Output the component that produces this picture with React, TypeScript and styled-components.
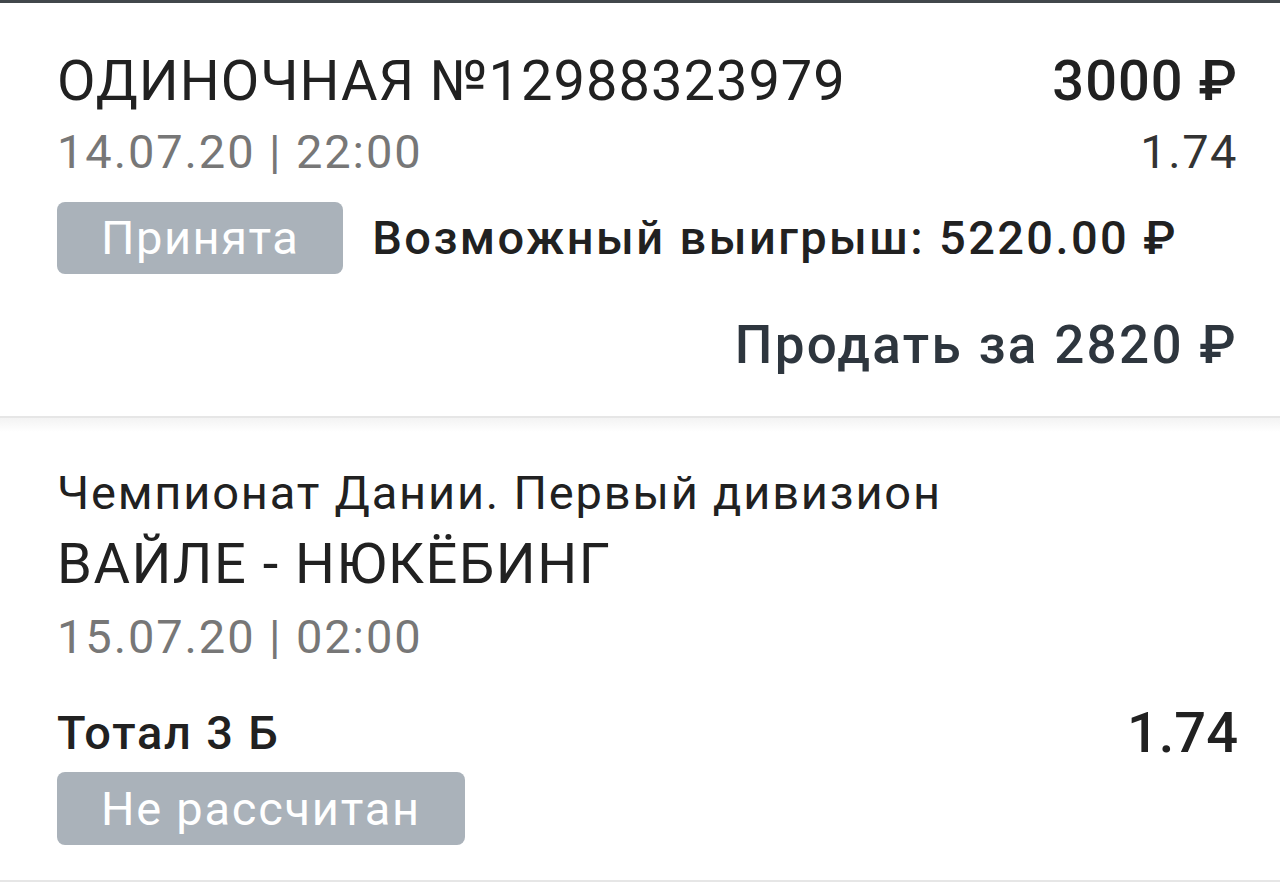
import React from 'react'
import styled, { createGlobalStyle } from 'styled-components'

const GlobalStyle = createGlobalStyle`
  html, body {
    margin: 0;
    padding: 0;
    background: #ffffff;
  }

  body {
    font-family: Roboto, "Noto Sans", "Liberation Sans", sans-serif;
    color: #212121;
    -webkit-font-smoothing: antialiased;
  }
`

interface IBetCoupon {
  number: string
  date: string
  stake: number
  coef: string
  status: string
  possibleWin: string
  sellPrice: number
}

interface IBetEvent {
  league: string
  teams: string
  date: string
  outcome: string
  coef: string
  status: string
}

const coupon: IBetCoupon = {
  number: '12988323979',
  date: '14.07.20 | 22:00',
  stake: 3000,
  coef: '1.74',
  status: 'Принята',
  possibleWin: '5220.00',
  sellPrice: 2820,
}

const event: IBetEvent = {
  league: 'Чемпионат Дании. Первый дивизион',
  teams: 'ВАЙЛЕ - НЮКЁБИНГ',
  date: '15.07.20 | 02:00',
  outcome: 'Тотал 3 Б',
  coef: '1.74',
  status: 'Не рассчитан',
}

const App = () => {
  return (
    <Page>
      <GlobalStyle />

      <Coupon>
        <Row>
          <Title>ОДИНОЧНАЯ №{coupon.number}</Title>
          <Stake>{coupon.stake} ₽</Stake>
        </Row>

        <Row>
          <DateText>{coupon.date}</DateText>
          <Coef>{coupon.coef}</Coef>
        </Row>

        <StatusRow>
          <Badge>{coupon.status}</Badge>
          <PossibleWin>Возможный выигрыш: {coupon.possibleWin} ₽</PossibleWin>
        </StatusRow>

        <SellRow>
          <SellButton>Продать за {coupon.sellPrice} ₽</SellButton>
        </SellRow>
      </Coupon>

      <Divider />

      <Event>
        <League>{event.league}</League>
        <Teams>{event.teams}</Teams>
        <DateText>{event.date}</DateText>

        <OutcomeRow>
          <Outcome>{event.outcome}</Outcome>
          <OutcomeCoef>{event.coef}</OutcomeCoef>
        </OutcomeRow>

        <EventBadge>{event.status}</EventBadge>
      </Event>
    </Page>
  )
}

const Page = styled.div`
  display: flex;
  flex-direction: column;

  width: 100%;
  min-height: 882px;

  border-top: 3px solid #41474b;
  box-sizing: border-box;
`

const Coupon = styled.section`
  display: flex;
  flex-direction: column;

  padding: 43px 42px 41px 57px;
`

const Row = styled.div`
  display: flex;
  justify-content: space-between;
  align-items: center;
`

const Title = styled.span`
  font-size: 56px;
  line-height: 70px;
  letter-spacing: 1px;
  color: #212121;
`

const Stake = styled.span`
  font-size: 56px;
  line-height: 70px;
  font-weight: 500;
  letter-spacing: 1px;
  color: #212121;
`

const DateText = styled.span`
  font-size: 47px;
  line-height: 72px;
  letter-spacing: 1.9px;
  color: #777777;
`

const Coef = styled.span`
  font-size: 47px;
  line-height: 72px;
  letter-spacing: 1.5px;
  color: #333333;
`

const StatusRow = styled.div`
  display: flex;
  align-items: center;
  gap: 29px;

  margin-top: 14px;
`

const Badge = styled.span`
  display: inline-block;

  padding: 0 44px;

  border-radius: 8px;

  font-size: 47px;
  line-height: 72px;
  letter-spacing: 1.5px;
  color: #ffffff;

  background: #aab2ba;
`

const PossibleWin = styled.span`
  font-size: 47px;
  line-height: 72px;
  font-weight: 500;
  letter-spacing: 2.4px;
  color: #212121;
`

const SellRow = styled.div`
  display: flex;
  justify-content: flex-end;

  margin-top: 41px;
`

const SellButton = styled.span`
  cursor: pointer;
  user-select: none;

  font-size: 53px;
  line-height: 60px;
  font-weight: 500;
  letter-spacing: 2.3px;
  color: #2e363e;
`

const Divider = styled.div`
  height: 14px;

  border-top: 2px solid #e6e6e6;

  background: linear-gradient(to bottom, #f3f3f3, #ffffff);
`

const Event = styled.section`
  display: flex;
  flex-direction: column;
  align-items: flex-start;

  padding: 28px 42px 35px 57px;

  border-bottom: 2px solid #e6e6e6;

  ${DateText} {
    line-height: 70px;
  }
`

const League = styled.span`
  font-size: 47px;
  line-height: 66px;
  letter-spacing: 1.8px;
  color: #212121;
`

const Teams = styled.span`
  font-size: 56px;
  line-height: 76px;
  letter-spacing: 1.5px;
  color: #212121;
`

const OutcomeRow = styled.div`
  display: flex;
  justify-content: space-between;
  align-items: center;
  align-self: stretch;

  margin-top: 31px;
`

const Outcome = styled.span`
  font-size: 47px;
  line-height: 60px;
  font-weight: 500;
  letter-spacing: 1.8px;
  color: #212121;
`

const OutcomeCoef = styled.span`
  font-size: 56px;
  line-height: 60px;
  font-weight: 500;
  color: #212121;
`

const EventBadge = styled(Badge)`
  margin-top: 9px;

  line-height: 73px;
  letter-spacing: 1.75px;
`

export default App
